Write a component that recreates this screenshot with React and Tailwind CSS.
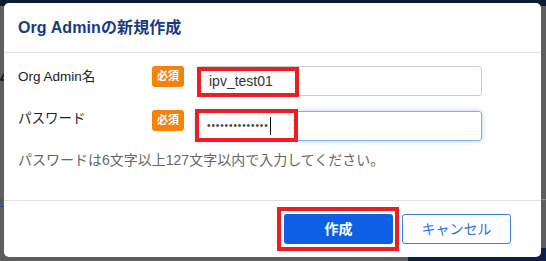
export default function App() {
  const font = { fontFamily: '"Liberation Sans", "Noto Sans CJK JP", sans-serif' };
  return (
    <div className="relative w-[546px] h-[261px] overflow-hidden bg-[#5e5e5e]" style={font}>
      {/* backdrop pieces */}
      <div className="absolute left-0 top-0 w-[546px] h-[6px] bg-[#0c1a33]" />
      <div className="absolute left-0 top-[70px] text-[#0c1a33] text-[16px] font-bold leading-none">4</div>
      <div className="absolute left-0 top-[198px] w-[4px] h-[9px] border-b border-[#2a3f8a] text-[#2a3f8a] text-[9px] leading-none">I</div>
      <div className="absolute left-[541px] top-[199px] w-[5px] h-[1px] bg-[#8a8a8a]" />
      <div className="absolute left-[408px] top-[248px] w-[138px] h-[13px] bg-[#0b1f4a]" />

      {/* modal */}
      <div className="absolute left-[4px] top-[3px] w-[537px] h-[254px] bg-white rounded-[5px] flex flex-col">
        <div className="h-[50px] border-b border-[#e2e2e2] flex items-center pl-[14px] pt-[1px]">
          <span className="text-[16px] font-bold text-[#173a80] tracking-[0.1px]">Org Adminの新規作成</span>
        </div>
        <div className="flex-1 flex flex-col pl-[14px] pt-[13px]">
          <div className="flex items-start h-[30px]">
            <div className="w-[134px] text-[13.5px] text-[#222] pt-[1px]">Org Admin名</div>
            <div className="w-[32px] h-[21px] rounded-[3px] bg-[#f5820b] text-white text-[11px] font-bold flex items-center justify-center">必須</div>
            <div className="relative ml-[13px] w-[285px] h-[30px] border border-[#cdcdcd] rounded-[3px] flex items-center pl-[11px] text-[14px] text-[#333]">
              ipv_test01
              <div className="absolute left-[-1px] top-[0px] w-[102px] h-[30px] border-[4px] border-[#ee1c25]" />
            </div>
          </div>
          <div className="flex items-start h-[30px] mt-[14px]">
            <div className="w-[134px] text-[13.5px] text-[#222] -mt-[1px]">パスワード</div>
            <div className="w-[32px] h-[21px] rounded-[3px] bg-[#f5820b] text-white text-[11px] font-bold flex items-center justify-center">必須</div>
            <div className="relative ml-[12px] mt-[1px] w-[286px] h-[30px] border border-[#7fb1ea] rounded-[3px] shadow-[0_0_5px_rgba(102,170,238,0.55)] flex items-center pl-[10px] text-[#444]">
              <span className="text-[10px] tracking-[0.9px] leading-none">••••••••••••••</span>
              <span className="ml-[1px] w-[1px] h-[18px] bg-black" />
              <div className="absolute left-[-2px] top-[-3px] w-[103px] h-[33px] border-[4px] border-[#ee1c25]" />
            </div>
          </div>
          <div className="mt-[10px] text-[14px] text-[#666]">パスワードは6文字以上127文字以内で入力してください。</div>
        </div>
        <div className="h-[57px] border-t border-[#e2e2e2] flex items-center justify-end pr-[30px] gap-[9px]">
          <div className="relative w-[109px] h-[30px] rounded-[3px] bg-[#0f5fe6] text-white text-[14px] font-bold flex items-center justify-center">
            作成
            <div className="absolute left-[-7px] top-[-7px] w-[122px] h-[44px] border-[4px] border-[#ee1c25]" />
          </div>
          <div className="w-[109px] h-[30px] rounded-[3px] border border-[#3c7fe0] text-[#2b73e0] text-[14px] flex items-center justify-center">キャンセル</div>
        </div>
      </div>
    </div>
  );
}
